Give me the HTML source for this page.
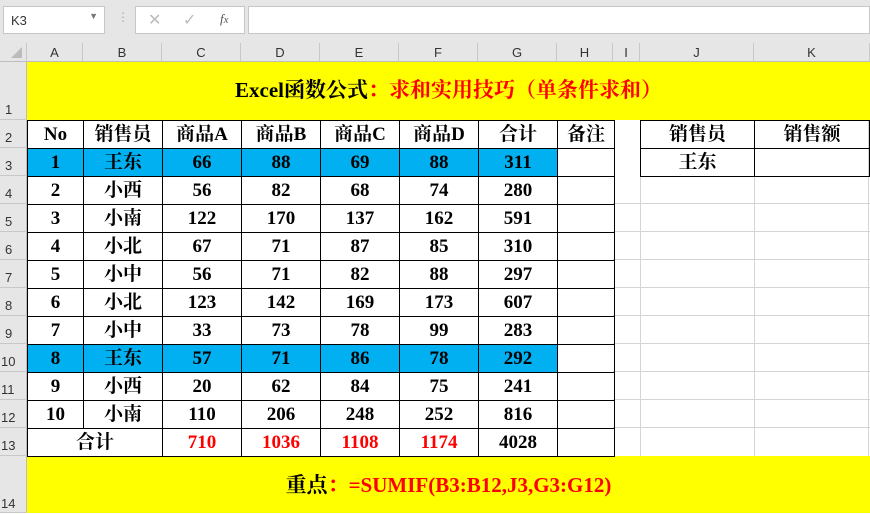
<!DOCTYPE html>
<html><head><meta charset="utf-8"><style>
*{margin:0;padding:0;box-sizing:border-box}
body{width:870px;height:513px;overflow:hidden;background:#fff;position:relative;font-family:"Liberation Sans",sans-serif}
.top{position:absolute;left:0;top:0;width:870px;height:43px;background:#e6e6e6}
.nb{position:absolute;left:3px;top:6px;width:102px;height:28px;background:#fff;border:1px solid #c6c6c6;font-size:13px;color:#333;padding:6px 0 0 7px}
.fb{position:absolute;left:135px;top:6px;width:110px;height:28px;background:#fff;border:1px solid #c6c6c6}
.fx{position:absolute;left:248px;top:6px;width:622px;height:28px;background:#fff;border:1px solid #c6c6c6}
.colh{position:absolute;top:43px;height:19px;background:#e6e6e6;border-right:1px solid #c8c8c8;border-bottom:1px solid #bdbdbd;font-size:13px;color:#333;text-align:center;line-height:19px}
.rowh{position:absolute;left:0;width:27px;background:#e6e6e6;border-bottom:1px solid #c8c8c8;border-right:1px solid #bdbdbd;font-size:13px;color:#333;padding-left:5px}
.vl{position:absolute;top:120px;height:336px;width:1px;background:#d4d4d4}
.hl{position:absolute;left:613px;width:257px;height:1px;background:#d4d4d4}
.yel{position:absolute;left:27px;width:843px;background:#ffff00;font-family:"Liberation Serif","Noto Serif CJK SC",serif;font-weight:bold;font-size:21px;text-align:center}
table{position:absolute;border-collapse:collapse;table-layout:fixed;font-family:"Liberation Serif","Noto Serif CJK SC",serif;font-weight:bold;font-size:19px}
td{border:1px solid #000;height:28px;text-align:center;padding:0;line-height:26px}
.bl td.c{background:#00b0f0}
.r{color:#f00}
</style></head><body>
<div class="top">
<div class="nb">K3<span style="position:absolute;right:6px;top:4px;font-size:9px;color:#777">▼</span></div>
<div style="position:absolute;left:117px;top:10px;color:#aaa;font-size:12px">⋮</div>
<div class="fb"><span style="position:absolute;left:12px;top:3px;color:#bbb;font-size:16px">✕</span><span style="position:absolute;left:47px;top:3px;color:#bbb;font-size:16px">✓</span><span style="position:absolute;left:84px;top:4px;color:#555;font-size:13px;font-style:italic;font-family:'Liberation Serif',serif">f<small>x</small></span></div>
<div class="fx"></div>
</div>
<div class="colh" style="left:0;width:27px;background:#e6e6e6"><span style="position:absolute;right:4px;bottom:3px;width:0;height:0;border-left:11px solid transparent;border-bottom:11px solid #bbb"></span></div>
<div class="colh" style="left:27px;width:56px">A</div>
<div class="colh" style="left:83px;width:79px">B</div>
<div class="colh" style="left:162px;width:79px">C</div>
<div class="colh" style="left:241px;width:79px">D</div>
<div class="colh" style="left:320px;width:79px">E</div>
<div class="colh" style="left:399px;width:79px">F</div>
<div class="colh" style="left:478px;width:79px">G</div>
<div class="colh" style="left:557px;width:56px">H</div>
<div class="colh" style="left:613px;width:27px">I</div>
<div class="colh" style="left:640px;width:114px">J</div>
<div class="colh" style="left:754px;width:116px">K</div>

<div class="rowh" style="top:62px;height:58px;padding-top:40px">1</div>
<div class="rowh" style="top:120px;height:28px;padding-top:10px">2</div>
<div class="rowh" style="top:148px;height:28px;padding-top:10px">3</div>
<div class="rowh" style="top:176px;height:28px;padding-top:10px">4</div>
<div class="rowh" style="top:204px;height:28px;padding-top:10px">5</div>
<div class="rowh" style="top:232px;height:28px;padding-top:10px">6</div>
<div class="rowh" style="top:260px;height:28px;padding-top:10px">7</div>
<div class="rowh" style="top:288px;height:28px;padding-top:10px">8</div>
<div class="rowh" style="top:316px;height:28px;padding-top:10px">9</div>
<div class="rowh" style="top:344px;height:28px;padding-top:10px;padding-left:1px">10</div>
<div class="rowh" style="top:372px;height:28px;padding-top:10px;padding-left:1px">11</div>
<div class="rowh" style="top:400px;height:28px;padding-top:10px;padding-left:1px">12</div>
<div class="rowh" style="top:428px;height:28px;padding-top:10px;padding-left:1px">13</div>
<div class="rowh" style="top:456px;height:57px;padding-top:40px;padding-left:1px">14</div>

<div class="vl" style="left:640px"></div><div class="vl" style="left:754px"></div><div class="vl" style="left:868px"></div>
<div class="hl" style="top:203px"></div><div class="hl" style="top:231px"></div><div class="hl" style="top:259px"></div><div class="hl" style="top:287px"></div><div class="hl" style="top:315px"></div><div class="hl" style="top:343px"></div><div class="hl" style="top:371px"></div><div class="hl" style="top:399px"></div><div class="hl" style="top:427px"></div>

<div class="yel" style="top:62px;height:58px;line-height:56px">Excel函数公式<span class="r">：求和实用技巧（单条件求和）</span></div>
<div class="yel" style="top:456px;height:57px;line-height:58px">重点<span class="r">：=SUMIF(B3:B12,J3,G3:G12)</span></div>

<table style="left:27px;top:120px;width:587px">
<colgroup><col style="width:56px"><col style="width:79px"><col style="width:79px"><col style="width:79px"><col style="width:79px"><col style="width:79px"><col style="width:79px"><col style="width:57px"></colgroup>
<tr><td>No</td><td>销售员</td><td>商品A</td><td>商品B</td><td>商品C</td><td>商品D</td><td>合计</td><td>备注</td></tr>
<tr class="bl"><td class="c">1</td><td class="c">王东</td><td class="c">66</td><td class="c">88</td><td class="c">69</td><td class="c">88</td><td class="c">311</td><td></td></tr>
<tr><td>2</td><td>小西</td><td>56</td><td>82</td><td>68</td><td>74</td><td>280</td><td></td></tr>
<tr><td>3</td><td>小南</td><td>122</td><td>170</td><td>137</td><td>162</td><td>591</td><td></td></tr>
<tr><td>4</td><td>小北</td><td>67</td><td>71</td><td>87</td><td>85</td><td>310</td><td></td></tr>
<tr><td>5</td><td>小中</td><td>56</td><td>71</td><td>82</td><td>88</td><td>297</td><td></td></tr>
<tr><td>6</td><td>小北</td><td>123</td><td>142</td><td>169</td><td>173</td><td>607</td><td></td></tr>
<tr><td>7</td><td>小中</td><td>33</td><td>73</td><td>78</td><td>99</td><td>283</td><td></td></tr>
<tr class="bl"><td class="c">8</td><td class="c">王东</td><td class="c">57</td><td class="c">71</td><td class="c">86</td><td class="c">78</td><td class="c">292</td><td></td></tr>
<tr><td>9</td><td>小西</td><td>20</td><td>62</td><td>84</td><td>75</td><td>241</td><td></td></tr>
<tr><td>10</td><td>小南</td><td>110</td><td>206</td><td>248</td><td>252</td><td>816</td><td></td></tr>
<tr><td colspan="2">合计</td><td class="r">710</td><td class="r">1036</td><td class="r">1108</td><td class="r">1174</td><td>4028</td><td></td></tr>
</table>
<table style="left:640px;top:120px;width:229px">
<colgroup><col style="width:114px"><col style="width:115px"></colgroup>
<tr><td>销售员</td><td>销售额</td></tr>
<tr><td>王东</td><td></td></tr>
</table>
</body></html>
